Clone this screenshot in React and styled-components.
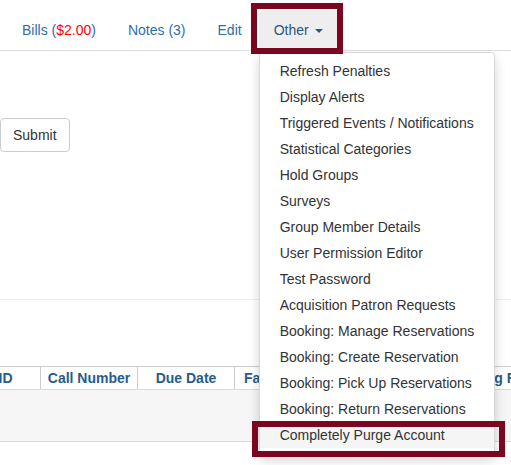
import React from "react"
import styled, { createGlobalStyle, css } from "styled-components"

const GlobalStyle = createGlobalStyle`
  body {
    margin: 0;
    background: #fff;
    font-family: "Liberation Sans", Arial, sans-serif;
    font-size: 14px;
    line-height: 20px;
    color: #333;
    overflow: hidden;
  }
  * {
    box-sizing: border-box;
  }
`

const Page = styled.div`
  width: 511px;
  height: 465px;
  overflow: hidden;
`

const TabBar = styled.ul`
  display: flex;
  list-style: none;
  margin: 10px 0 0;
  padding: 0 0 0 7px;
  border-bottom: 1px solid #ddd;
`

const TabItem = styled.li`
  position: relative;
  margin-right: 2px;
`

const TabLink = styled.a`
  display: block;
  padding: 10px 15px;
  line-height: 20px;
  color: #2f6ea8;
  text-decoration: none;
  border-radius: 4px 4px 0 0;
  white-space: nowrap;
  cursor: pointer;
  ${({ $open }) =>
    $open &&
    css`
      background: #eee;
      color: #2a5783;
    `}
`

const Due = styled.span`
  color: #f00;
`

const Caret = styled.span`
  display: inline-block;
  width: 0;
  height: 0;
  margin-left: 6px;
  vertical-align: middle;
  border-top: 4px solid currentColor;
  border-left: 4px solid transparent;
  border-right: 4px solid transparent;
`

const Menu = styled.ul`
  position: absolute;
  top: 100%;
  left: 0;
  z-index: 10;
  margin: 2px 0 0;
  padding: 5px 0;
  list-style: none;
  background: #fff;
  border: 1px solid rgba(0, 0, 0, 0.15);
  border-radius: 4px;
  box-shadow: 0 6px 12px rgba(0, 0, 0, 0.175);
`

const MenuItem = styled.li`
  position: relative;
  padding: 3px 20px;
  line-height: 20px;
  color: #333;
  white-space: nowrap;
  background: ${({ $active }) => ($active ? "#f5f5f5" : "transparent")};
`

/* maroon call-out frame drawn over a control */
const Callout = styled.span`
  position: absolute;
  left: ${({ $left }) => $left}px;
  top: ${({ $top }) => $top}px;
  width: ${({ $width }) => $width}px;
  height: ${({ $height }) => $height}px;
  border: 6px solid #7b0620;
  pointer-events: none;
  z-index: 20;
`

const FormRow = styled.div`
  margin-top: 67px;
`

const Button = styled.button`
  height: 34px;
  padding: 6px 12px;
  font-family: inherit;
  font-size: 14px;
  line-height: 20px;
  color: #333;
  background: #fff;
  border: 1px solid #ccc;
  border-radius: 4px;
`

const Rule = styled.hr`
  margin: 147px 0 0;
  border: 0;
  border-top: 1px solid #eee;
`

const Grid = styled.table`
  width: ${({ $width }) => $width}px;
  margin: 66px 0 0 -30px;
  border-collapse: collapse;
  table-layout: fixed;
`

const HeadCell = styled.th`
  width: ${({ $w }) => $w}px;
  height: 23px;
  padding: 0 4px;
  font-weight: bold;
  color: #275c8c;
  text-align: center;
  white-space: nowrap;
  overflow: hidden;
  border-top: 1px solid #ccc;
  border-left: 1px solid #ccc;
  border-right: 1px solid #ccc;
  border-bottom: 1px solid #c2e1e9;
`

const BodyCell = styled.td`
  height: 52px;
  background: #f6f6f6;
  border-bottom: 1px solid #c2e1e9;
`

const menuItems = [
  "Refresh Penalties",
  "Display Alerts",
  "Triggered Events / Notifications",
  "Statistical Categories",
  "Hold Groups",
  "Surveys",
  "Group Member Details",
  "User Permission Editor",
  "Test Password",
  "Acquisition Patron Requests",
  "Booking: Manage Reservations",
  "Booking: Create Reservation",
  "Booking: Pick Up Reservations",
  "Booking: Return Reservations",
  "Completely Purge Account",
]

const columns = [
  { label: "ID", w: 70 },
  { label: "Call Number", w: 97 },
  { label: "Due Date", w: 97 },
  { label: "Fare Level Description", w: 169 },
  { label: "Billing Rate", w: 190 },
]

const tableWidth = columns.reduce((sum, c) => sum + c.w, 0)

export default function App() {
  return (
    <Page>
      <GlobalStyle />
      <TabBar>
        <TabItem>
          <TabLink>
            Bills (<Due>$2.00</Due>)
          </TabLink>
        </TabItem>
        <TabItem>
          <TabLink>Notes (3)</TabLink>
        </TabItem>
        <TabItem>
          <TabLink>Edit</TabLink>
        </TabItem>
        <TabItem>
          <TabLink $open>
            Other
            <Caret />
          </TabLink>
          <Callout $left={-8} $top={-7} $width={92} $height={51} />
          <Menu>
            {menuItems.map((label, i) => {
              const last = i === menuItems.length - 1
              return (
                <MenuItem key={label} $active={last}>
                  {label}
                  {last && <Callout $left={-8} $top={-1} $width={253} $height={36} />}
                </MenuItem>
              )
            })}
          </Menu>
        </TabItem>
      </TabBar>

      <FormRow>
        <Button>Submit</Button>
      </FormRow>

      <Rule />

      <Grid $width={tableWidth}>
        <thead>
          <tr>
            {columns.map((c) => (
              <HeadCell key={c.label} $w={c.w}>
                {c.label}
              </HeadCell>
            ))}
          </tr>
        </thead>
        <tbody>
          <tr>
            <BodyCell colSpan={columns.length} />
          </tr>
        </tbody>
      </Grid>
    </Page>
  )
}
